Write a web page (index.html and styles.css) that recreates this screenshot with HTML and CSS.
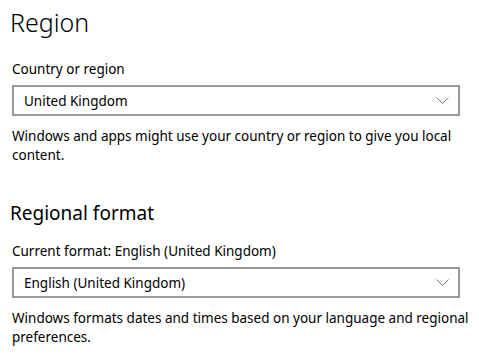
FILE: index.html
```html
<!DOCTYPE html>
<html lang="en">
<head>
    <meta charset="UTF-8">
    <title>Region</title>
    <link rel="stylesheet" href="styles.css">
</head>
<body>
<div class="page">
    <h1 class="title">Region</h1>

    <div class="label">Country or region</div>
    <div class="combo">
        <span class="combo-text">United Kingdom</span>
        <svg class="chevron" width="13" height="7" viewBox="0 0 13 7">
            <path d="M0.5 0.5 L6.5 6.5 L12.5 0.5" fill="none" stroke="#7a7a7a" stroke-width="1"/>
        </svg>
    </div>
    <p class="desc">Windows and apps might use your country or region to give you local content.</p>

    <h2 class="subtitle">Regional format</h2>

    <div class="label">Current format: English (United Kingdom)</div>
    <div class="combo">
        <span class="combo-text">English (United Kingdom)</span>
        <svg class="chevron" width="13" height="7" viewBox="0 0 13 7">
            <path d="M0.5 0.5 L6.5 6.5 L12.5 0.5" fill="none" stroke="#7a7a7a" stroke-width="1"/>
        </svg>
    </div>
    <p class="desc">Windows formats dates and times based on your language and regional preferences.</p>
</div>
</body>
</html>
```

FILE: styles.css
```css
body {
    margin: 0;
    background: #fff;
    color: #000;
    font-family: "Segoe UI", "Noto Sans", "Open Sans", sans-serif;
    font-size: 13.5px;
}

.page {
    width: 448px;
    padding: 0 12px;
}

.title {
    margin: 0;
    padding-top: 4px;
    font-size: 25px;
    font-weight: 300;
    line-height: 36px;
    margin-left: -2px;
}

.label {
    margin-top: 19px;
    line-height: 20px;
}

.combo {
    display: flex;
    align-items: center;
    justify-content: space-between;
    height: 27px;
    margin-top: 6px;
    padding: 0 9px 0 10px;
    border: 2px solid #999;
}

.chevron {
    display: block;
}

.desc {
    margin: 11px -14px 0 0;
    line-height: 19px;
}

.subtitle {
    margin: 35px 0 0 -2px;
    font-size: 19px;
    font-weight: 400;
    line-height: 26px;
}

.subtitle + .label {
    margin-top: 15px;
}
```
